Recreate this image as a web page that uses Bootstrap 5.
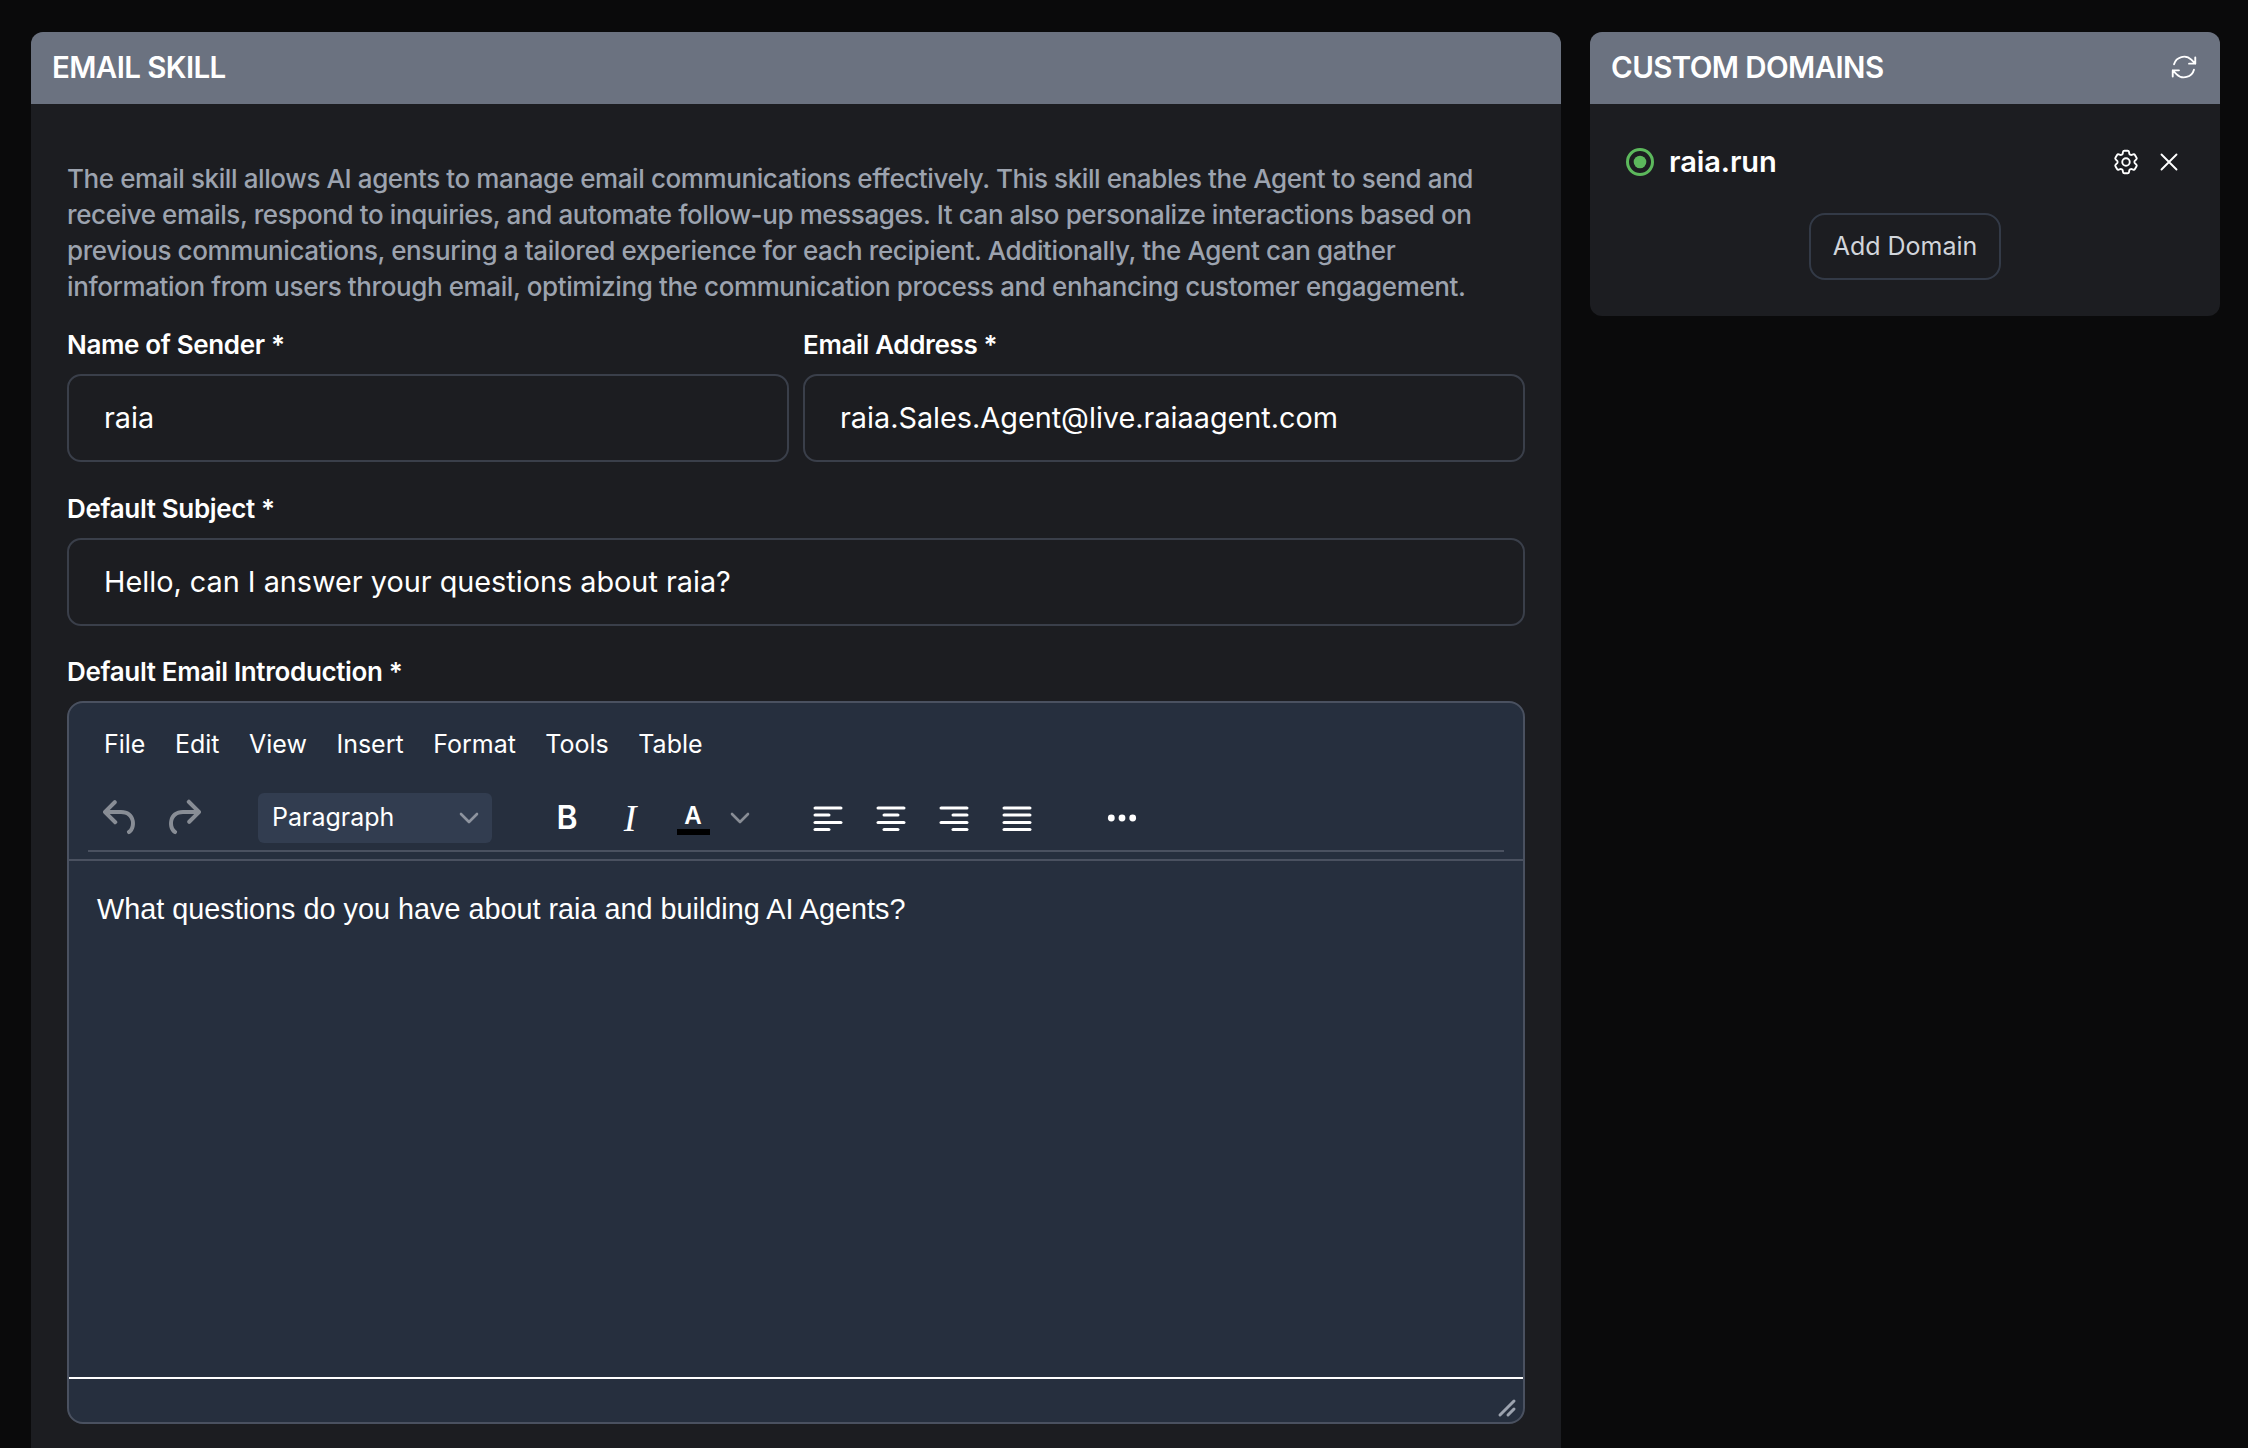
<!DOCTYPE html>
<html lang="en">
<head>
<meta charset="utf-8">
<title>Email Skill</title>
<link href="https://cdn.jsdelivr.net/npm/bootstrap@5.3.0/dist/css/bootstrap.min.css" rel="stylesheet">
<style>
html,body{height:1448px;overflow:hidden;background:#0a0a0b;font-family:Inter,"Liberation Sans",sans-serif;}
.page-wrap{padding:32px 28px 0 31px;gap:29px;height:1448px;align-items:flex-start;overflow:hidden;}
.panel{background:#1c1d21;border:0;border-radius:12px;overflow:hidden;color:#fff;}
.panel-main{width:1530px;height:1416px;flex:none;border-bottom-left-radius:0;border-bottom-right-radius:0;}
.panel-side{width:630px;height:284px;flex:none;}
.panel-head{background:#6b7280;color:#fff;height:72px;padding:0 21px 2px;border:0;border-radius:0!important;font-size:29.5px;font-weight:600;line-height:70px;letter-spacing:-.6px;}
.panel-main .panel-body{padding:57px 36px 0 36px;}
.intro{color:#9ca3af;font-size:26px;line-height:36px;margin:0 0 22px;font-weight:500;letter-spacing:-.4px;}
.fld-label{display:block;font-size:26px;line-height:36px;font-weight:600;margin:0 0 11px;color:#fff;letter-spacing:-.35px;}
.fld-group{margin-bottom:28px;}
.fld-row{gap:14px;}
.fld-row>.fld-group{flex:1 1 0;min-width:0;margin-bottom:29px;}
.form-control.fld-input{background:#1c1d21;border:2px solid #3a3f4a;border-radius:14px;height:88px;padding:0 35px 2px;color:#fff;font-size:28.8px;box-shadow:none;}
.mce-box{height:723px;background:#262f3e;border:2px solid #4a5160;border-radius:16px;overflow:hidden;}
.mce-menu{height:77px;padding:23px 0 0 35px;gap:29.5px;font-size:25px;color:#fff;line-height:36px;}
.mce-tools{height:72px;margin:0 19px;padding:5px 0 0 9px;border-bottom:2px solid #4a5160;align-items:center;}
.mce-btn{width:48px;height:48px;flex:none;display:flex;align-items:center;justify-content:center;color:#fff;}
.mce-btn svg{display:block;}
.mce-off{opacity:.45;}
.mce-redo{margin-left:14px;}
.mce-select{width:234px;height:50px;background:#323d50;border-radius:6px;margin:0 51px 0 51px;padding:0 13px 0 14px;font-size:25px;color:#fff;flex:none;}
.mce-b{font-weight:600;font-size:32px;line-height:1;}
.mce-i{font-style:italic;font-size:38px;line-height:1;font-family:"Liberation Serif",serif;margin-left:15px;}
.mce-a{font-size:24px;font-weight:600;line-height:1;flex-direction:column;margin-left:15px;}
.a-glyph{line-height:30px;}
.a-bar{width:33px;height:6px;background:#000;margin-top:-2px;}
.mce-chev{margin:0 54px 0 13px;flex:none;}
.mce-gap{margin-left:15px;}
.mce-more{margin-left:57px;}
.mce-editarea{flex:1;border-top:2px solid #4a5160;padding:28px 19px 0 28px;font-family:"Liberation Sans",Arial,sans-serif;font-size:28.8px;line-height:40px;color:#fff;margin-top:7px;}
.mce-status{height:45px;border-top:2px solid #fff;padding:0 6px 4px 0;align-items:flex-end;justify-content:flex-end;}
.dom-name{font-size:29px;font-weight:600;line-height:36px;letter-spacing:-.1px;}
.dom-row{padding:40px 36px 33px 36px;height:109px;}
.dom-dot{width:28px;height:28px;flex:none;margin-right:15px;}
.dom-action{color:#fff;width:30px;height:30px;flex:none;}
.dom-gap{margin-left:13px;}
.btn.dom-add{background:transparent;border:2px solid #333a47;border-radius:16px;color:#d1d5db;font-size:25px;height:67px;width:192px;padding:0;line-height:1;display:flex;align-items:center;justify-content:center;}
</style>
</head>
<body>
<div class="page-wrap d-flex">
  <div class="card panel panel-main">
    <div class="card-header panel-head">EMAIL SKILL</div>
    <div class="card-body panel-body">
      <p class="intro">The email skill allows AI agents to manage email communications effectively. This skill enables the Agent to send and receive emails, respond to inquiries, and automate follow-up messages. It can also personalize interactions based on previous communications, ensuring a tailored experience for each recipient. Additionally, the Agent can gather information from users through email, optimizing the communication process and enhancing customer engagement.</p>
      <div class="d-flex fld-row">
        <div class="fld-group"><label class="fld-label" for="f1">Name of Sender *</label><input id="f1" class="form-control fld-input" value="raia"></div>
        <div class="fld-group"><label class="fld-label" for="f2">Email Address *</label><input id="f2" class="form-control fld-input" value="raia.Sales.Agent@live.raiaagent.com"></div>
      </div>
      <div class="fld-group"><label class="fld-label" for="f3">Default Subject *</label><input id="f3" class="form-control fld-input" value="Hello, can I answer your questions about raia?"></div>
      <div><span class="fld-label">Default Email Introduction *</span>
        <div class="mce-box d-flex flex-column">
          <div class="mce-menu d-flex"><span>File</span><span>Edit</span><span>View</span><span>Insert</span><span>Format</span><span>Tools</span><span>Table</span></div>
          <div class="mce-tools d-flex">
            <span class="mce-btn mce-off"><svg width="48" height="48" viewBox="0 0 24 24" fill="currentColor"><path d="M6.4 8H12c3.7 0 6.2 2 6.8 5.1.6 2.7-.4 5.6-2.3 6.8a1 1 0 0 1-1-1.8c1.1-.6 1.8-2.7 1.4-4.6-.5-2.1-2.1-3.5-4.9-3.5H6.4l3.3 3.3a1 1 0 1 1-1.4 1.4l-5-5a1 1 0 0 1 0-1.4l5-5a1 1 0 0 1 1.4 1.4L6.4 8Z"/></svg></span>
            <span class="mce-btn mce-off mce-redo"><svg width="48" height="48" viewBox="0 0 24 24" fill="currentColor"><path d="M17.6 10H12c-2.8 0-4.4 1.4-4.9 3.5-.4 2 .3 4 1.4 4.6a1 1 0 1 1-1 1.8c-2-1.2-2.9-4.1-2.3-6.8.6-3 3-5.1 6.8-5.1h5.6l-3.3-3.3a1 1 0 1 1 1.4-1.4l5 5a1 1 0 0 1 0 1.4l-5 5a1 1 0 0 1-1.4-1.4l3.3-3.3Z"/></svg></span>
            <div class="mce-select d-flex align-items-center justify-content-between"><span>Paragraph</span><svg class="mce-off" width="20" height="12" viewBox="0 0 20 12" fill="none" stroke="#fff" stroke-width="2.6" stroke-linecap="round" stroke-linejoin="round"><path d="M2 2l8 8 8-8"/></svg></div>
            <span class="mce-btn mce-b">B</span>
            <span class="mce-btn mce-i">I</span>
            <span class="mce-btn mce-a"><span class="a-glyph">A</span><span class="a-bar"></span></span>
            <svg class="mce-off mce-chev" width="20" height="12" viewBox="0 0 20 12" fill="none" stroke="#fff" stroke-width="2.6" stroke-linecap="round" stroke-linejoin="round"><path d="M2 2l8 8 8-8"/></svg>
            <span class="mce-btn"><svg width="48" height="48" viewBox="0 0 48 48" fill="#fff"><rect x="9.5" y="12.4" width="29" height="3.2" rx="1.6"/><rect x="9.5" y="19.4" width="17" height="3.2" rx="1.6"/><rect x="9.5" y="26.9" width="29" height="3.2" rx="1.6"/><rect x="9.5" y="33.9" width="17" height="3.2" rx="1.6"/></svg></span>
            <span class="mce-btn mce-gap"><svg width="48" height="48" viewBox="0 0 48 48" fill="#fff"><rect x="9.5" y="12.4" width="29" height="3.2" rx="1.6"/><rect x="15.5" y="19.4" width="17" height="3.2" rx="1.6"/><rect x="9.5" y="26.9" width="29" height="3.2" rx="1.6"/><rect x="15.5" y="33.9" width="17" height="3.2" rx="1.6"/></svg></span>
            <span class="mce-btn mce-gap"><svg width="48" height="48" viewBox="0 0 48 48" fill="#fff"><rect x="9.5" y="12.4" width="29" height="3.2" rx="1.6"/><rect x="21.5" y="19.4" width="17" height="3.2" rx="1.6"/><rect x="9.5" y="26.9" width="29" height="3.2" rx="1.6"/><rect x="21.5" y="33.9" width="17" height="3.2" rx="1.6"/></svg></span>
            <span class="mce-btn mce-gap"><svg width="48" height="48" viewBox="0 0 48 48" fill="#fff"><rect x="9.5" y="12.4" width="29" height="3.2" rx="1.6"/><rect x="9.5" y="19.4" width="29" height="3.2" rx="1.6"/><rect x="9.5" y="26.9" width="29" height="3.2" rx="1.6"/><rect x="9.5" y="33.9" width="29" height="3.2" rx="1.6"/></svg></span>
            <span class="mce-btn mce-more"><svg width="48" height="48" viewBox="0 0 48 48" fill="#fff"><circle cx="13.3" cy="24" r="3.4"/><circle cx="24" cy="24" r="3.4"/><circle cx="34.7" cy="24" r="3.4"/></svg></span>
          </div>
          <div class="mce-editarea">What questions do you have about raia and building AI Agents?</div>
          <div class="mce-status d-flex"><svg width="20" height="20" viewBox="0 0 20 20" fill="none" stroke="#9ca3af" stroke-width="3" stroke-linecap="round"><path d="M3 17L17 3M11 17l6-6"/></svg></div>
        </div>
      </div>
    </div>
  </div>
  <div class="card panel panel-side">
    <div class="card-header panel-head d-flex justify-content-between align-items-center">
      <span>CUSTOM DOMAINS</span>
      <svg width="30" height="30" viewBox="0 0 24 24" fill="none" stroke="#fff" stroke-width="1.5" stroke-linecap="round" stroke-linejoin="round"><path d="M16.023 9.348h4.992v-.001M2.985 19.644v-4.992m0 0h4.992m-4.993 0l3.181 3.183a8.25 8.25 0 0013.803-3.7M4.031 9.865a8.25 8.25 0 0113.803-3.7l3.181 3.182m0-4.991v4.99"/></svg>
    </div>
    <div class="dom-row d-flex align-items-center">
      <svg class="dom-dot" width="28" height="28" viewBox="0 0 28 28"><circle cx="14" cy="14" r="12.5" fill="none" stroke="#5cb85c" stroke-width="3"/><circle cx="14" cy="14" r="6.3" fill="#5cb85c"/></svg>
      <span class="dom-name flex-grow-1">raia.run</span>
      <svg class="dom-action" width="30" height="30" viewBox="0 0 24 24" fill="none" stroke="#fff" stroke-width="1.5" stroke-linecap="round" stroke-linejoin="round"><path d="M9.594 3.94c.09-.542.56-.94 1.11-.94h2.593c.55 0 1.02.398 1.11.94l.213 1.281c.063.374.313.686.645.87.074.04.147.083.22.127.324.196.72.257 1.075.124l1.217-.456a1.125 1.125 0 011.37.49l1.296 2.247a1.125 1.125 0 01-.26 1.431l-1.003.827c-.293.24-.438.613-.431.992a6.759 6.759 0 010 .255c-.007.378.138.75.43.99l1.005.828c.424.35.534.954.26 1.43l-1.298 2.247a1.125 1.125 0 01-1.369.491l-1.217-.456c-.355-.133-.75-.072-1.076.124a6.57 6.57 0 01-.22.128c-.331.183-.581.495-.644.869l-.213 1.28c-.09.543-.56.941-1.11.941h-2.594c-.55 0-1.02-.398-1.11-.94l-.213-1.281c-.062-.374-.312-.686-.644-.87a6.52 6.52 0 01-.22-.127c-.325-.196-.72-.257-1.076-.124l-1.217.456a1.125 1.125 0 01-1.369-.49l-1.297-2.247a1.125 1.125 0 01.26-1.431l1.004-.827c.292-.24.437-.613.43-.992a6.932 6.932 0 010-.255c.007-.378-.138-.75-.43-.99l-1.004-.828a1.125 1.125 0 01-.26-1.43l1.297-2.247a1.125 1.125 0 011.37-.491l1.216.456c.356.133.751.072 1.076-.124.072-.044.146-.087.22-.128.332-.183.582-.495.644-.869l.214-1.281z"/><path d="M15 12a3 3 0 11-6 0 3 3 0 016 0z"/></svg>
      <svg class="dom-action dom-gap" width="30" height="30" viewBox="0 0 24 24" fill="none" stroke="#fff" stroke-width="1.5" stroke-linecap="round" stroke-linejoin="round"><path d="M6 18L18 6M6 6l12 12"/></svg>
    </div>
    <div class="d-flex justify-content-center"><button type="button" class="btn dom-add">Add Domain</button></div>
  </div>
</div>
<script src="https://cdn.jsdelivr.net/npm/bootstrap@5.3.0/dist/js/bootstrap.bundle.min.js"></script>
</body>
</html>
